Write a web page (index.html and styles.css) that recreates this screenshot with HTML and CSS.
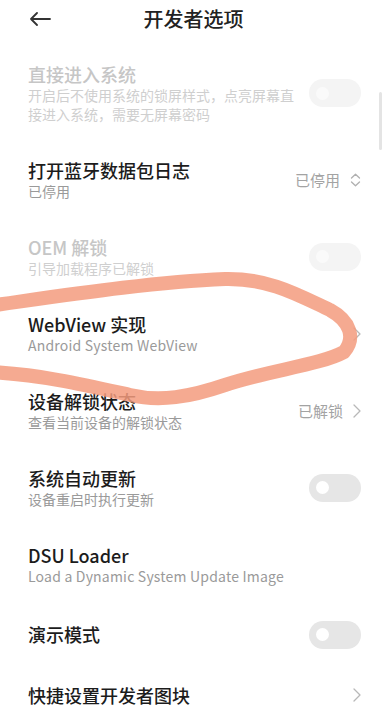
FILE: index.html
```html
<!DOCTYPE html>
<html lang="zh-CN">
<head>
<meta charset="utf-8">
<title>开发者选项</title>
<link rel="stylesheet" href="styles.css">
</head>
<body>
<div class="screen">
  <header class="topbar">
    <svg class="back" width="22" height="14" viewBox="0 0 22 14"><path d="M21 7H2M8 1L2 7l6 6" fill="none" stroke="#333" stroke-width="1.8" stroke-linecap="round" stroke-linejoin="round"/></svg>
    <h1 class="title-main">开发者选项</h1>
    <span></span>
  </header>
  <div class="list">
    <div class="item disabled">
      <div class="text">
        <div class="title">直接进入系统</div>
        <div class="sub">开启后不使用系统的锁屏样式，点亮屏幕直接进入系统，需要无屏幕密码</div>
      </div>
      <span class="switch"></span>
    </div>
    <div class="item">
      <div class="text">
        <div class="title">打开蓝牙数据包日志</div>
        <div class="sub">已停用</div>
      </div>
      <div class="value">已停用
        <svg width="11" height="14" viewBox="0 0 11 14"><path d="M1.5 5L5.5 1.2 9.5 5M1.5 9l4 3.8 4-3.8" fill="none" stroke="#b0b0b0" stroke-width="1.3" stroke-linecap="round" stroke-linejoin="round"/></svg>
      </div>
    </div>
    <div class="item disabled">
      <div class="text">
        <div class="title">OEM 解锁</div>
        <div class="sub">引导加载程序已解锁</div>
      </div>
      <span class="switch"></span>
    </div>
    <div class="item">
      <div class="text">
        <div class="title">WebView 实现</div>
        <div class="sub latin">Android System WebView</div>
      </div>
      <svg class="chev" width="8" height="14" viewBox="0 0 8 14"><path d="M1 1l6 6-6 6" fill="none" stroke="#b8b8b8" stroke-width="1.3" stroke-linecap="round" stroke-linejoin="round"/></svg>
    </div>
    <div class="item">
      <div class="text">
        <div class="title">设备解锁状态</div>
        <div class="sub">查看当前设备的解锁状态</div>
      </div>
      <div class="value">已解锁
        <svg class="chev" width="8" height="14" viewBox="0 0 8 14"><path d="M1 1l6 6-6 6" fill="none" stroke="#b8b8b8" stroke-width="1.3" stroke-linecap="round" stroke-linejoin="round"/></svg>
      </div>
    </div>
    <div class="item">
      <div class="text">
        <div class="title">系统自动更新</div>
        <div class="sub">设备重启时执行更新</div>
      </div>
      <span class="switch"></span>
    </div>
    <div class="item">
      <div class="text">
        <div class="title">DSU Loader</div>
        <div class="sub latin">Load a Dynamic System Update Image</div>
      </div>
    </div>
    <div class="item">
      <div class="text">
        <div class="title">演示模式</div>
      </div>
      <span class="switch"></span>
    </div>
    <div class="item">
      <div class="text">
        <div class="title">快捷设置开发者图块</div>
      </div>
      <svg class="chev" width="8" height="14" viewBox="0 0 8 14"><path d="M1 1l6 6-6 6" fill="none" stroke="#b8b8b8" stroke-width="1.3" stroke-linecap="round" stroke-linejoin="round"/></svg>
    </div>
  </div>
  <div class="scrollbar"></div>
  <svg class="scribble" width="387" height="721" viewBox="0 0 387 721">
    <path d="M-12 306C60 296 150 282 225 279C270 278 300 296 330 310C350 321 356 338 344 352C320 365 270 370 225 385C190 397 160 402 130 395C90 386 40 374 -12 372" fill="none" stroke="#f39b7e" stroke-opacity="0.85" stroke-width="14" stroke-linecap="round" stroke-linejoin="round"/>
  </svg>
</div>
</body>
</html>
```
FILE: styles.css
```css
* { box-sizing: border-box; }
html, body { margin: 0; padding: 0; background: #fff; }
body { font-family: "Noto Sans CJK SC", "Noto Sans", sans-serif; }
.screen { position: relative; width: 387px; height: 721px; overflow: hidden; background: #fff; }
.topbar { height: 38px; display: grid; grid-template-columns: 1fr auto 1fr; align-items: center; }
.back { display: block; margin-left: 29px; }
.title-main { margin: 0; font-size: 20px; font-weight: 500; color: #222; line-height: 38px; }
.list { padding-top: 7px; }
.item { display: flex; align-items: center; justify-content: space-between; gap: 10px; padding: 17.5px 26px 17.5px 28px; }
.text { flex: 1; min-width: 0; }
.title { font-size: 18px; line-height: 23px; font-weight: 500; color: #1c1c1c; }
.sub { font-size: 14px; line-height: 19px; color: #9a9a9a; }
.sub.latin { letter-spacing: 0.2px; }
.disabled .title { color: #c6c6c6; }
.disabled .sub { color: #cfcfcf; }
.switch { flex: none; width: 52px; height: 28px; border-radius: 14px; background: #e6e6e6; position: relative; }
.switch::after { content: ""; position: absolute; left: 7px; top: 7.5px; width: 13px; height: 13px; border-radius: 50%; background: #fff; }
.disabled .switch { background: #f4f4f4; }
.disabled .switch::after { background: #fafafa; }
.value { flex: none; display: flex; align-items: center; gap: 10px; font-size: 15px; color: #a3a3a3; }
.chev { display: block; flex: none; }
.scrollbar { position: absolute; left: 379px; top: 92px; width: 3px; height: 58px; border-radius: 2px; background: #e4e4e4; }
.scribble { position: absolute; left: 0; top: 0; pointer-events: none; }
```
